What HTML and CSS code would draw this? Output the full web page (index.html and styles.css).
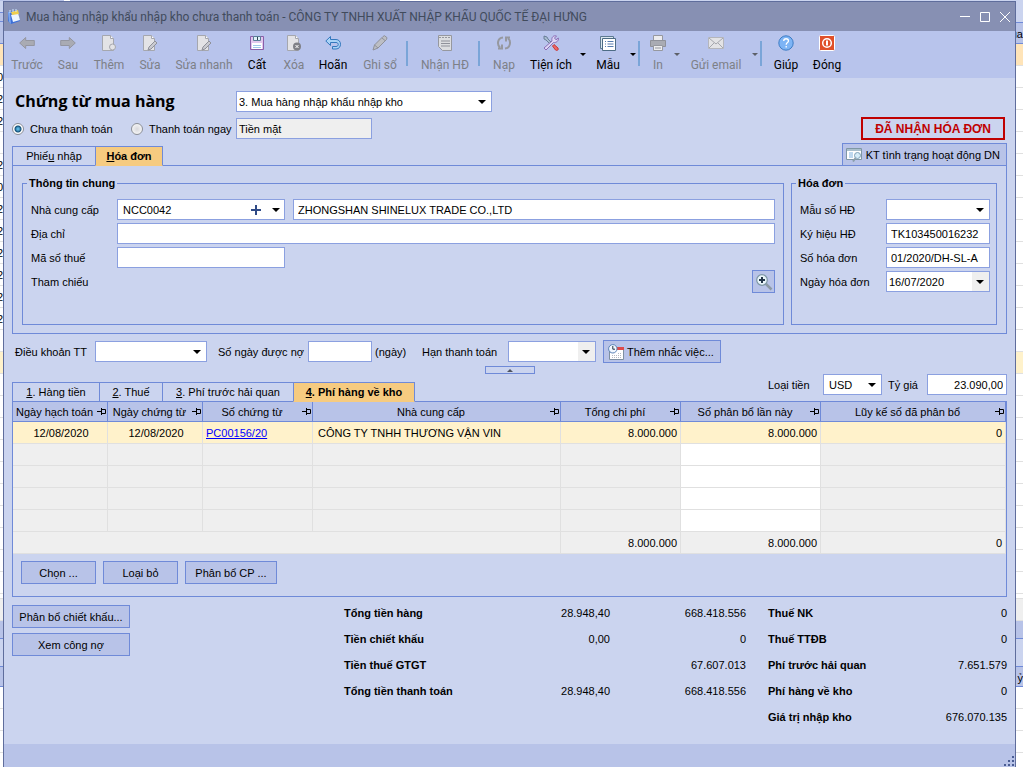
FILE: index.html
```html
<!DOCTYPE html>
<html lang="vi">
<head>
<meta charset="utf-8">
<title>Mua hàng nhập khẩu nhập kho chưa thanh toán</title>
<link rel="stylesheet" href="styles.css">
</head>
<body>
<div class="top-strip"></div>
<div class="desktop">
<div class="strip strip-left" aria-hidden="true">
  <i class="s-light h12"></i><i class="s-blue h9"></i><i class="s-head h22"></i><i class="s-sel"></i>
  <i>0</i><i>2</i><i>2</i><i></i><i>2</i><i>0</i><i>2</i><i>2</i><i>2</i><i>2</i><i>2</i><i>2</i><i></i><i class="s-cur"></i>
  <i></i><i></i><i></i><i></i><i></i><i></i><i></i><i></i><i></i><i></i><i class="h5"></i><i class="s-gray"></i><i class="s-head h18"></i><i class="s-light h28"></i><i class="s-head h20"></i><i></i><i></i><i></i><i></i>
</div>
<main class="window">
  <header class="titlebar">
    <svg class="app-icon" width="14" height="16" viewBox="0 0 14 16"><path d="M1 3l9-2 3 11-9 3-3-3z" fill="#3c6fd8"/><path d="M1 3l1 10 2 2-1-12z" fill="#7aa6f0"/><path d="M4 6l7-2 2 7-7 2z" fill="#eef6ff"/><path d="M4 3l7-2 1 4-7 1z" fill="#f0cf4e"/><path d="M3 1v3M6 0v3M9 0v3" stroke="#cfe8ff" stroke-width="1"/></svg>
    <h2 class="caption">Mua hàng nhập khẩu nhập kho chưa thanh toán - CÔNG TY TNHH XUẤT NHẬP KHẨU QUỐC TẾ ĐẠI HƯNG</h2>
    <button class="sys" aria-label="Thu nhỏ"><svg width="12" height="12" viewBox="0 0 12 12"><path d="M1 5.5h10" stroke="#fff"/></svg></button>
    <button class="sys" aria-label="Phóng to"><svg width="12" height="12" viewBox="0 0 12 12"><path d="M1.5 1.5h9v9h-9z" stroke="#fff" fill="none"/></svg></button>
    <button class="sys" aria-label="Đóng cửa sổ"><svg width="12" height="12" viewBox="0 0 12 12"><path d="M1 1l10 10M11 1L1 11" stroke="#fff"/></svg></button>
  </header>

  <nav class="toolbar">
    <button class="tool w42" disabled><svg viewBox="0 0 16 16"><path d="M.7 8l6-5.500v3h8.600v5H6.700v3z" fill="#a9abb3" stroke="#9496a0"/></svg>Trước</button>
    <button class="tool w40" disabled><svg viewBox="0 0 16 16"><path d="M15.300 8l-6-5.500v3H.7v5h8.600v3z" fill="#a9abb3" stroke="#9496a0"/></svg>Sau</button>
    <button class="tool w42" disabled><svg viewBox="0 0 16 16"><path d="M1.500.5h8l3 3v12h-11z" fill="#e3e3e6" stroke="#a5a7ae"/><path d="M9.500.5v3h3" fill="#fff" stroke="#a5a7ae"/><circle cx="11.500" cy="12" r="3" fill="#e3e3e6" stroke="#a5a7ae"/></svg>Thêm</button>
    <button class="tool w40" disabled><svg viewBox="0 0 16 16"><path d="M1.500.5h8l3 3v12h-11z" fill="#e3e3e6" stroke="#a5a7ae"/><path d="M9.500.5v3h3" fill="#fff" stroke="#a5a7ae"/><path d="M6 15l1-3 6-6 2 2-6 6z" fill="#c9cad0" stroke="#8f919a"/></svg>Sửa</button>
    <button class="tool w68" disabled><svg viewBox="0 0 16 16"><path d="M1.500.5h8l3 3v12h-11z" fill="#e3e3e6" stroke="#a5a7ae"/><path d="M9.500.5v3h3" fill="#fff" stroke="#a5a7ae"/><path d="M6 15l1-3 6-6 2 2-6 6z" fill="#c9cad0" stroke="#8f919a"/></svg>Sửa nhanh</button>
    <button class="tool w38"><svg viewBox="0 0 16 16"><path d="M1.500 1.500h13v13h-13z" fill="#e2c8ee" stroke="#8a5fa8"/><path d="M4.500 1.500h7v4h-7z" fill="#dff2f8" stroke="#587e96"/><path d="M8.500 2v3" stroke="#345"/><path d="M3 8h10v6H3z" fill="#fff"/><path d="M4 10.500h8M4 12.500h8" stroke="#9fc8ea"/></svg>Cất</button>
    <button class="tool w36" disabled><svg viewBox="0 0 16 16"><path d="M1.500.5h8l3 3v12h-11z" fill="#e3e3e6" stroke="#a5a7ae"/><path d="M9.500.5v3h3" fill="#fff" stroke="#a5a7ae"/><circle cx="11" cy="11.500" r="4" fill="#7f8087"/><path d="M9.500 10l3 3M12.500 10l-3 3" stroke="#fff"/></svg>Xóa</button>
    <button class="tool w42"><svg viewBox="0 0 16 16"><path d="M5.500 1.500L.8 6l4.700 4.500V7.500H11c3 0 3 4 0 4H7.500V14H11c6 0 6-9.500 0-9.500H5.500z" fill="#a9d3f7" stroke="#3478bd"/></svg>Hoãn</button>
    <button class="tool w52" disabled><svg viewBox="0 0 16 16"><path d="M1 15l1.500-5L11 1.500 12.500 .7l2.500 2-.5 1.800L6 13z" fill="#bcbec4" stroke="#8f919a"/><path d="M2.500 10L6 13M10 3l3 2.500" stroke="#8f919a"/></svg>Ghi sổ</button>
    <span class="sep"></span>
    <button class="tool w66" disabled><svg viewBox="0 0 16 16"><path d="M1.500.5h13v15h-9l-4-4z" fill="#dcdde0" stroke="#96989f"/><path d="M2 2.500h12" stroke="#96989f" stroke-dasharray="2 1"/><path d="M4 6h9M4 8.500h9M4 11h9" stroke="#8f919a"/></svg>Nhận HĐ</button>
    <span class="sep"></span>
    <button class="tool w40" disabled><svg viewBox="0 0 16 16"><path d="M7 2.500C1 3 1 10 4 12.500M2 13.500h4v-4M9 13.500c6-.5 6-8 3-10M14 2.500h-4v4" fill="none" stroke="#96989f" stroke-width="2"/></svg>Nạp</button>
    <button class="tool w54"><svg viewBox="0 0 16 16"><path d="M1 1l3 1 1 2 4 4-1.500 1.500L3 5 1 4z" fill="#a8bcd0" stroke="#587089" stroke-width=".8"/><path d="M1 13L9 6C8 2 11 0 13.500 1L11.500 3l1.500 1.800L15.300 3C16 6 13 8 10.500 7.500L3 15z" fill="#dcd6f5" stroke="#8a6cb5"/><path d="M9.500 11l1.500-1.500 4 3.500c1 2-1 3-2.500 2z" fill="#ef6666" stroke="#c43838"/></svg>Tiện ích</button>
    <button class="drop" aria-label="Mở tiện ích"></button>
    <button class="tool w40"><svg viewBox="0 0 16 16"><path d="M.5 1.500h13v12H.5z" fill="#dbe7f0" stroke="#5d7a91"/><path d="M2.500 3.500h13v12h-13z" fill="#fff" stroke="#4d6c85"/><path d="M5 6.500h1M7.500 6.500h6M5 9h1M7.500 9h6M5 11.500h1M7.500 11.500h6" stroke="#587db0"/></svg>Mẫu</button>
    <button class="drop" aria-label="Mở mẫu"></button>
    <span class="sep"></span>
    <button class="tool w28" disabled><svg viewBox="0 0 16 16"><path d="M3.500.5h9v5h-9z" fill="#ececee" stroke="#96989f"/><path d="M.5 5.500h15v6H.5z" fill="#a9abb3" stroke="#8f919a"/><path d="M3.500 10.500h9v5h-9z" fill="#ececee" stroke="#96989f"/><path d="M5 13h6" stroke="#96989f"/></svg>In</button>
    <button class="drop" disabled aria-label="Mở in"></button>
    <button class="tool w68" disabled><svg viewBox="0 0 16 16"><path d="M.5 2.500h15v11H.5z" fill="#e3e3e6" stroke="#b5b6bc"/><path d="M1 3l7 6 7-6M1 13l5-5M15 13l-5-5" fill="none" stroke="#a5a7ae"/></svg>Gửi email</button>
    <button class="drop" disabled aria-label="Mở gửi email"></button>
    <span class="sep"></span>
    <button class="tool w40"><svg viewBox="0 0 16 16"><circle cx="8" cy="8" r="7.200" fill="#7db4f5" stroke="#3e7dc4"/><path d="M5.700 6c0-3 4.800-3 4.800 0 0 1.500-2.300 1.700-2.300 3.700M8.200 11v1.600" fill="none" stroke="#fff" stroke-width="1.300"/></svg>Giúp</button>
    <button class="tool w42"><svg viewBox="0 0 16 16"><rect x=".5" y=".5" width="15" height="15" rx="1" fill="#e0502a" stroke="#fff"/><circle cx="8" cy="8" r="4.300" fill="none" stroke="#fff" stroke-width="1.500"/><path d="M8 5.500v5" stroke="#fff" stroke-width="2"/></svg>Đóng</button>
  </nav>

  <div class="content">
    <section class="head">
      <div class="head-left">
        <div class="head-grid">
          <h1>Chứng từ mua hàng</h1>
          <span class="combo"><select aria-label="Loại chứng từ"><option>3. Mua hàng nhập khẩu nhập kho</option></select></span>
          <div class="radios">
            <label><input type="radio" name="pay" checked>Chưa thanh toán</label>
            <label><input type="radio" name="pay">Thanh toán ngay</label>
          </div>
          <input class="box pay-method" type="text" value="Tiền mặt" readonly aria-label="Phương thức">
        </div>
        <div class="tabs">
          <button class="tab t84"><span>Phiế<u>u</u> nhập</span></button>
          <button class="tab t68 active"><span><u>H</u>óa đơn</span></button>
        </div>
      </div>
      <div class="head-right">
        <strong class="stamp">ĐÃ NHẬN HÓA ĐƠN</strong>
        <button class="btn check-btn"><svg width="16" height="14" viewBox="0 0 16 14"><path d="M.5.500h15v11H.5z" fill="#fff" stroke="#7f97a5"/><path d="M1 2h14" stroke="#a9bfcc" stroke-width="2"/><path d="M3 5h4M3 7h4M3 9h4" stroke="#7fb2df"/><circle cx="11.500" cy="7.500" r="3" fill="#d5ecf8" stroke="#7ea0b8"/><path d="M9.500 10L7 13.500" stroke="#8b9fac" stroke-width="2"/></svg>KT tình trạng hoạt động DN</button>
      </div>
    </section>

    <section class="panel info">
      <fieldset class="general">
        <legend>Thông tin chung</legend>
        <label for="ncc">Nhà cung cấp</label>
        <span class="box lookup"><input id="ncc" type="text" value="NCC0042"><button class="plus" aria-label="Thêm nhà cung cấp"><svg width="10" height="10" viewBox="0 0 10 10"><path d="M5 0v10M0 5h10" stroke="#2f4a86" stroke-width="2"/></svg></button><button class="caret" aria-label="Chọn nhà cung cấp"></button></span>
        <input class="box" type="text" value="ZHONGSHAN SHINELUX TRADE CO.,LTD" aria-label="Tên nhà cung cấp">
        <label for="addr">Địa chỉ</label>
        <input id="addr" class="box wide" type="text">
        <label for="mst">Mã số thuế</label>
        <input id="mst" class="box tax" type="text">
        <span class="ref-label">Tham chiếu</span>
        <button class="btn search" aria-label="Tìm tham chiếu"><svg width="18" height="18" viewBox="0 0 18 18"><path d="M10.500 10.500l6 6" stroke="#8c9aa5" stroke-width="2.500"/><circle cx="7" cy="7" r="5.300" fill="#eaf6fb" stroke="#7d97a5" stroke-width="1.200"/><path d="M7 4v6M4 7h6" stroke="#26384c" stroke-width="2"/></svg></button>
      </fieldset>
      <fieldset class="invoice">
        <legend>Hóa đơn</legend>
        <label for="mau">Mẫu số HĐ</label><span class="combo"><select id="mau"><option></option></select></span>
        <label for="ky">Ký hiệu HĐ</label><input id="ky" class="box" type="text" value="TK103450016232">
        <label for="so">Số hóa đơn</label><input id="so" class="box" type="text" value="01/2020/DH-SL-A">
        <label for="ngay">Ngày hóa đơn</label><span class="combo date"><select id="ngay"><option>16/07/2020</option></select></span>
      </fieldset>
    </section>

    <section class="terms">
      <label class="l80" for="dk">Điều khoản TT</label><span class="combo c112"><select id="dk"><option></option></select></span>
      <label class="l90" for="sn">Số ngày được nợ</label><input id="sn" class="box c64" type="text"><span class="unit">(ngày)</span>
      <label class="l86" for="han">Hạn thanh toán</label><span class="combo date c88"><select id="han"><option></option></select></span>
      <button class="btn remind"><svg width="16" height="16" viewBox="0 0 16 16"><path d="M1.500 3.500h14v12h-14z" fill="#fff" stroke="#7e8fa0"/><path d="M7 3h9v3H7z" fill="#dd4b4b"/><path d="M4 11.500h10M4 13.500h10M10 9.500h4" stroke="#b5b9c0" stroke-dasharray="1 1"/><circle cx="4.800" cy="4.800" r="4.200" fill="#f2f8ff" stroke="#5780b4"/><path d="M4.800 2v3.200H7" fill="none" stroke="#234"/></svg>Thêm nhắc việc...</button>
    </section>
    <button class="collapse" aria-label="Thu gọn"></button>

    <section class="detail-head">
      <div class="tabs">
        <button class="tab t88"><span><u>1</u>. Hàng tiền</span></button>
        <button class="tab t64"><span><u>2</u>. Thuế</span></button>
        <button class="tab t132"><span><u>3</u>. Phí trước hải quan</span></button>
        <button class="tab t122 active"><span><u>4</u>. Phí hàng về kho</span></button>
      </div>
      <div class="currency">
        <label for="lt">Loại tiền</label><span class="combo c59"><select id="lt"><option>USD</option></select></span>
        <label class="rate-label" for="tg">Tỷ giá</label><input id="tg" class="box rate" type="text" value="23.090,00">
      </div>
    </section>

    <section class="panel detail">
      <table>
        <colgroup><col class="k95"><col class="k95"><col class="k110"><col><col class="k120"><col class="k140"><col class="k186"></colgroup>
        <thead><tr>
          <th>Ngày hạch toán<svg class="pin" viewBox="0 0 9 7"><path d="M0 3.500h4M4.500 0v7M4.500 1.500h4v4h-4" fill="none" stroke="#000"/></svg></th>
          <th>Ngày chứng từ<svg class="pin" viewBox="0 0 9 7"><path d="M0 3.500h4M4.500 0v7M4.500 1.500h4v4h-4" fill="none" stroke="#000"/></svg></th>
          <th>Số chứng từ<svg class="pin" viewBox="0 0 9 7"><path d="M0 3.500h4M4.500 0v7M4.500 1.500h4v4h-4" fill="none" stroke="#000"/></svg></th>
          <th>Nhà cung cấp<svg class="pin" viewBox="0 0 9 7"><path d="M0 3.500h4M4.500 0v7M4.500 1.500h4v4h-4" fill="none" stroke="#000"/></svg></th>
          <th>Tổng chi phí<svg class="pin" viewBox="0 0 9 7"><path d="M0 3.500h4M4.500 0v7M4.500 1.500h4v4h-4" fill="none" stroke="#000"/></svg></th>
          <th>Số phân bổ lần này<svg class="pin" viewBox="0 0 9 7"><path d="M0 3.500h4M4.500 0v7M4.500 1.500h4v4h-4" fill="none" stroke="#000"/></svg></th>
          <th>Lũy kế số đã phân bổ<svg class="pin" viewBox="0 0 9 7"><path d="M0 3.500h4M4.500 0v7M4.500 1.500h4v4h-4" fill="none" stroke="#000"/></svg></th>
        </tr></thead>
        <tbody>
          <tr class="current"><td class="mid">12/08/2020</td><td class="mid">12/08/2020</td><td><a href="#">PC00156/20</a></td><td>CÔNG TY TNHH THƯƠNG VẬN VIN</td><td class="num">8.000.000</td><td class="num">8.000.000</td><td class="num">0</td></tr>
          <tr><td></td><td></td><td></td><td></td><td></td><td class="edit"></td><td></td></tr>
          <tr><td></td><td></td><td></td><td></td><td></td><td class="edit"></td><td></td></tr>
          <tr><td></td><td></td><td></td><td></td><td></td><td class="edit"></td><td></td></tr>
          <tr><td></td><td></td><td></td><td></td><td></td><td class="edit"></td><td></td></tr>
        </tbody>
        <tfoot><tr><td colspan="4"></td><td class="num">8.000.000</td><td class="num">8.000.000</td><td class="num">0</td></tr></tfoot>
      </table>
      <div class="actions">
        <button class="btn b75">Chọn ...</button>
        <button class="btn b75">Loại bỏ</button>
        <button class="btn b92">Phân bổ CP ...</button>
      </div>
    </section>

    <section class="summary">
      <div class="side-btns">
        <button class="btn">Phân bổ chiết khấu...</button>
        <button class="btn">Xem công nợ</button>
      </div>
      <table class="totals money">
        <tr><th>Tổng tiền hàng</th><td>28.948,40</td><td>668.418.556</td></tr>
        <tr><th>Tiền chiết khấu</th><td>0,00</td><td>0</td></tr>
        <tr><th>Tiền thuế GTGT</th><td></td><td>67.607.013</td></tr>
        <tr><th>Tổng tiền thanh toán</th><td>28.948,40</td><td>668.418.556</td></tr>
      </table>
      <table class="totals stock">
        <tr><th>Thuế NK</th><td>0</td></tr>
        <tr><th>Thuế TTĐB</th><td>0</td></tr>
        <tr><th>Phí trước hải quan</th><td>7.651.579</td></tr>
        <tr><th>Phí hàng về kho</th><td>0</td></tr>
        <tr><th>Giá trị nhập kho</th><td>676.070.135</td></tr>
      </table>
    </section>
  </div>
  <footer class="statusbar"><svg width="10" height="10" viewBox="0 0 10 10"><path d="M8 0h2v2H8zM4 4h2v2H4zM8 4h2v2H8zM0 8h2v2H0zM4 8h2v2H4zM8 8h2v2H8z" fill="#4a5d94"/></svg></footer>
</main>
<div class="strip strip-right" aria-hidden="true">
  <i class="s-light h22"></i><i class="s-head h21">ua</i><i class="s-sel"></i>
  <i></i><i></i><i></i><i></i><i></i><i></i><i></i><i></i><i></i><i></i><i></i><i></i><i></i><i class="s-cur"></i>
  <i></i><i></i><i></i><i></i><i></i><i></i><i></i><i></i><i></i><i></i><i class="h5"></i><i class="s-gray"></i><i class="s-head h18"></i><i class="s-light h28"></i><i class="s-head h20">ỷ</i><i></i><i></i><i></i><i></i>
</div>
</div>
</body>
</html>
```

FILE: styles.css
```css
:root {
  --bg: #cbd4ef;
  --face: #b8c3e8;
  --line: #6f8ad8;
  --field-line: #8ba0e0;
  --frame: #5f6d9c;
  --grid: #e0e0e0;
  --accent: #f6cb80;
}
* { box-sizing: border-box; }
body {
  margin: 0;
  min-height: 100vh;
  display: flex;
  flex-direction: column;
  background: #fff;
  color: #000;
  font: 11px/14px "Liberation Sans", Arial, sans-serif;
}
button, input, select { font: inherit; color: inherit; }
button { padding: 0; border: 0; background: none; }
svg { flex: none; display: block; }

.top-strip { height: 1px; background: linear-gradient(90deg, #b8c3e8 0 64px, #fff 64px 70px, #b8c3e8 70px 400px, #fff 400px 500px, #b8c3e8 500px 580px, #cbd4ef 580px); }
.desktop { flex: 1; display: grid; grid-template-columns: 3px 1fr 7px; }
.strip { display: flex; flex-direction: column; overflow: hidden; height: calc(100vh - 1px); }
.strip i { flex: none; height: 22px; padding-top: 4px; border-bottom: 1px solid var(--grid); font-style: normal; overflow: hidden; display: flex; }
.strip-left i, .strip-right i { justify-content: flex-end; }
.strip .h5 { height: 5px; padding: 0; }
.strip .h9 { height: 9px; padding: 0; }
.strip .h12 { height: 12px; padding: 0; }
.strip .h18 { height: 18px; padding: 0; }
.strip .h20 { height: 20px; }
.strip .h21 { height: 21px; }
.strip .h22 { height: 22px; }
.strip .h28 { height: 28px; }
.strip .s-light { background: var(--bg); border-color: var(--line); }
.strip .s-blue { background: var(--face); border-color: var(--line); }
.strip .s-head { background: var(--face); border-color: var(--line); }
.strip .s-sel { background: #ffe4b8; }
.strip .s-cur { background: #fff2cb; }
.strip .s-gray { background: #efefef; }

.window { display: flex; flex-direction: column; min-width: 0; border: 1px solid var(--frame); border-bottom: 0; background: var(--bg); }
.titlebar { height: 29px; display: flex; align-items: center; gap: 8px; padding: 0 4px 0 3px; background: #8790b3; }
.caption { flex: 1; margin: 0 0 0 -3px; font: 12px/16px Roboto, "Noto Sans", sans-serif; color: #414b5c; white-space: nowrap; overflow: hidden; }
.sys { width: 12px; height: 12px; }

.toolbar { height: 47px; display: flex; padding: 4px 2px 0; background: #b8c4ec; font: 12px/16px Roboto, "Noto Sans", sans-serif; }
.tool { display: flex; flex-direction: column; align-items: center; gap: 6px; height: 40px; white-space: nowrap; color: #000; }
.tool:disabled { color: #7d8087; }
.tool svg { width: 16px; height: 16px; }
.w28 { width: 28px; } .w36 { width: 36px; } .w38 { width: 38px; } .w40 { width: 40px; } .w42 { width: 42px; }
.w52 { width: 52px; } .w54 { width: 54px; } .w66 { width: 66px; } .w68 { width: 68px; }
.sep { width: 2px; height: 25px; margin: 6px 4px 0 0; background: #7aa5d8; }
.drop { width: 10px; height: 38px; display: flex; align-items: center; justify-content: center; }
.drop::before { content: ""; border: 3px solid transparent; border-top-color: #000; border-bottom: 0; }
.drop:disabled::before { border-top-color: #5d6068; }

.content { padding: 13px 8px 0; }
.head { display: flex; justify-content: space-between; }
.head-grid { display: grid; grid-template-columns: 224px 256px; gap: 6px 0; align-items: center; }
h1 { margin: 0; padding-left: 3px; font: bold 16px/21px "Open Sans", "Noto Sans", sans-serif; white-space: nowrap; }
.radios { display: flex; }
.radios label { display: flex; align-items: center; width: 119px; gap: 6px; white-space: nowrap; }
.radios label + label { width: 105px; }
.radios input { flex: none; appearance: none; width: 12px; height: 12px; margin: 0; border: 1px solid #8b8f97; border-radius: 50%; background: radial-gradient(#d8d8dc, #fff); }
.radios input:checked { background: radial-gradient(circle, #58b4e0 0 1px, #134f78 3px, #fff 4px); }

.box, .combo { height: 21px; border: 1px solid var(--field-line); background: #fff; }
.box { width: 100%; min-width: 0; padding: 0 4px; }
.pay-method { width: 136px; padding: 0 2px; background: #efefef; }
.combo { position: relative; display: flex; }
.combo select { appearance: none; width: 100%; height: 19px; border: 0; background: transparent; padding: 0 16px 0 2px; }
.combo::after { content: ""; position: absolute; right: 5px; top: 8px; border: 4px solid transparent; border-top-color: #000; border-bottom: 0; pointer-events: none; }
.date { background: linear-gradient(270deg, #efefef 17px, #fff 17px); }

.tabs { display: flex; margin: 7px 0 -1px; }
.tab { height: 20px; border: 1px solid var(--line); margin-right: -1px; white-space: nowrap; }
.tab.active { background: var(--accent); border-bottom-color: var(--accent); font-weight: bold; }
.t64 { width: 64px; } .t68 { width: 68px; } .t84 { width: 84px; } .t88 { width: 88px; } .t122 { width: 122px; } .t132 { width: 132px; }

.head-right { display: flex; flex-direction: column; align-items: flex-end; justify-content: flex-end; gap: 3px; }
.stamp { margin-right: 2px; padding: 3px 12px 2px; border: 2px solid #c00000; color: #c00000; font-size: 12px; line-height: 14px; white-space: nowrap; }
.btn { display: flex; align-items: center; justify-content: center; height: 23px; border: 1px solid var(--line); background: var(--face); white-space: nowrap; }
.check-btn { gap: 4px; padding: 0 6px 0 3px; margin-bottom: -1px; }

.panel { border: 1px solid var(--line); }
.info { display: flex; gap: 7px; padding: 10px 9px 8px; }
fieldset { margin: 0; min-width: 0; border: 1px solid var(--line); padding: 9px 8px 32px; display: grid; gap: 3px 0; align-items: center; }
legend { margin-left: -4px; padding: 0 2px; font-weight: bold; line-height: 14px; }
.general { flex: 1; grid-template-columns: 86px 168px 1fr; }
.general > .box { width: auto; }
.general > .lookup + .box { margin-left: 8px; }
.general > .wide { grid-column: 2 / 4; }
.tax { grid-column: 2; }
.ref-label { grid-column: 1; }
.search { grid-column: 3; justify-self: end; width: 23px; margin: -1px 0; }
.invoice { width: 206px; padding-right: 6px; grid-template-columns: 86px 1fr; }
.lookup { display: flex; align-items: center; padding: 0 4px 0 5px; }
.lookup input { flex: 1; min-width: 0; border: 0; padding: 0; background: none; }
.plus { display: flex; margin-right: 11px; }
.caret { border: 4px solid transparent; border-top-color: #000; border-bottom: 0; }

.terms { display: flex; align-items: center; margin-top: 6px; padding-left: 3px; white-space: nowrap; }
.l80 { width: 80px; } .l90 { width: 90px; } .l86 { width: 86px; }
.c112 { width: 112px; margin-right: 11px; }
.c64 { width: 64px; }
.c88 { width: 88px; margin-right: 7px; }
.c59 { width: 59px; }
.unit { width: 50px; padding-left: 3px; }
.remind { gap: 3px; padding: 0 6px 0 4px; }
.collapse { display: flex; align-items: center; justify-content: center; width: 50px; height: 8px; margin: 3px auto 0; border: 1px solid var(--line); }
.collapse::before { content: ""; border: 3px solid transparent; border-bottom-color: #4f5460; border-top: 0; }

.detail-head { display: flex; justify-content: space-between; align-items: flex-start; }
.detail-head .tabs { margin-top: 8px; }
.currency { display: flex; align-items: center; white-space: nowrap; }
.currency label { width: 55px; }
.currency .rate-label { width: 45px; padding-left: 6px; }
.currency .combo select { padding-left: 5px; }
.rate { width: 80px; text-align: right; padding: 0 3px; }

table { border-collapse: separate; border-spacing: 0; }
.detail { padding-bottom: 12px; }
.detail table { width: 100%; table-layout: fixed; }
.k95 { width: 95px; } .k110 { width: 110px; } .k120 { width: 120px; } .k140 { width: 140px; } .k186 { width: 185px; }
.detail th { position: relative; height: 20px; padding: 0 11px 0 0; border-right: 1px solid var(--line); border-bottom: 1px solid var(--line); background: var(--face); font-weight: normal; white-space: nowrap; }
.pin { position: absolute; right: 1px; top: 6px; width: 9px; height: 7px; }
.detail td { height: 22px; padding: 0 3px 0 5px; border-right: 1px solid var(--grid); border-bottom: 1px solid var(--grid); background: #efefef; }
.detail .edit { background: #fff; }
.detail .current td { background: #fff2cb; }
.detail a { color: #00f; margin-left: -2px; }
.detail .mid { text-align: center; }
.detail .num { text-align: right; }
.actions { display: flex; gap: 7px; padding: 7px 8px 0; }
.b75 { width: 75px; } .b92 { width: 92px; }

.summary { display: grid; grid-template-columns: 332px 402px 22px 1fr; align-items: start; padding-top: 3px; }
.side-btns { display: grid; gap: 5px; width: 118px; padding-top: 5px; }
.totals { width: 100%; }
.stock { grid-column: 4; }
.totals th { height: 26px; padding: 0; text-align: left; }
.totals td { padding: 0; text-align: right; }
.money td:last-child { width: 136px; }

.statusbar { margin-top: auto; height: 23px; display: flex; justify-content: flex-end; align-items: flex-end; padding: 0 1px 1px; background: var(--face); }
```
